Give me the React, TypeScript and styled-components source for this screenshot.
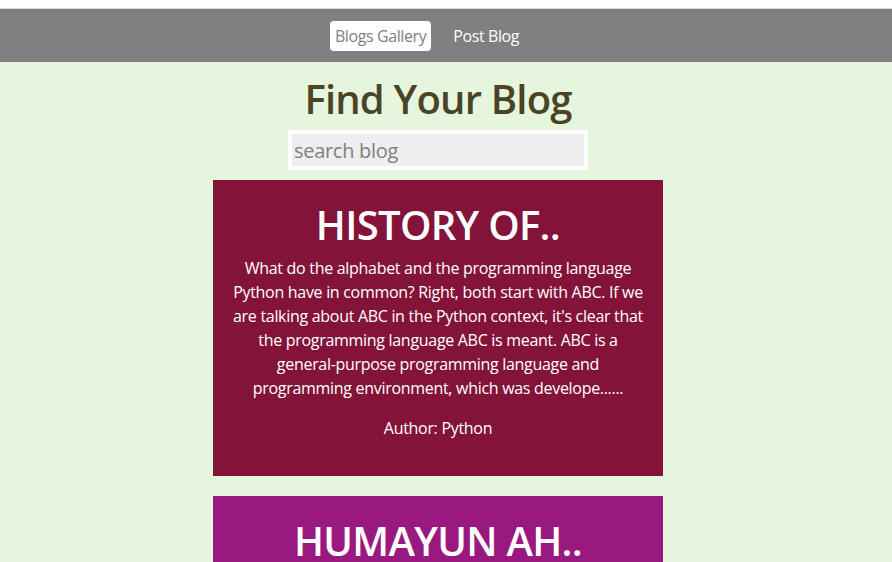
import React from "react";
import styled, { createGlobalStyle } from "styled-components";

const Global = createGlobalStyle`
  html, body { margin: 0; padding: 0; background: #e6f5de; }
  body { font-family: "Open Sans", "Noto Sans", sans-serif; overflow: hidden; }
  * { box-sizing: border-box; }
`;

const TopStrip = styled.div`
  height: 9px;
  background: #ffffff;
  border-bottom: 1px solid #d9d9d9;
`;

const Nav = styled.nav`
  height: 53px;
  background: #808080;
  display: flex;
  align-items: center;
  justify-content: center;
  gap: 17px;
  padding-right: 38px;
`;

const NavLink = styled.a<{ $active?: boolean }>`
  font-size: 16px;
  line-height: 22px;
  letter-spacing: -0.4px;
  padding: 4px 5px;
  border-radius: 4px;
  color: ${(p) => (p.$active ? "#808080" : "#ffffff")};
  background: ${(p) => (p.$active ? "#ffffff" : "transparent")};
  text-decoration: none;
  cursor: pointer;
`;

const Main = styled.main`
  width: calc(100% - 16px);
  display: flex;
  flex-direction: column;
  align-items: center;
`;

const Title = styled.h1`
  margin: 13px 0 7px;
  font-size: 40px;
  line-height: 48px;
  font-weight: 600;
  letter-spacing: -0.8px;
  color: #4a4424;
`;

const Search = styled.input`
  width: 300px;
  height: 40px;
  border: 4px solid #ffffff;
  background: #eeeeee;
  font-family: inherit;
  font-size: 20px;
  letter-spacing: -0.3px;
  padding: 0 2px;
  outline: none;
  color: #333;
  &::placeholder { color: #808080; }
`;

const Cards = styled.div`
  margin-top: 10px;
  display: flex;
  flex-direction: column;
  gap: 20px;
`;

const Card = styled.article<{ $bg: string }>`
  width: 450px;
  background: ${(p) => p.$bg};
  color: #ffffff;
  text-align: center;
  padding: 18px 20px 36px;
`;

const CardTitle = styled.h2`
  margin: 0 0 4px;
  font-size: 40px;
  line-height: 54px;
  font-weight: 600;
  letter-spacing: -0.7px;
`;

const CardText = styled.p`
  margin: 0;
  font-size: 16px;
  line-height: 24px;
  letter-spacing: -0.3px;
`;

const Author = styled.p`
  margin: 16px 0 0;
  font-size: 16px;
  line-height: 24px;
  letter-spacing: -0.3px;
`;

const blogs = [
  {
    title: "HISTORY OF..",
    bg: "#831339",
    text:
      "What do the alphabet and the programming language Python have in common? Right, both start with ABC. If we are talking about ABC in the Python context, it's clear that the programming language ABC is meant. ABC is a general-purpose programming language and programming environment, which was develope......",
    author: "Python",
  },
  {
    title: "HUMAYUN AH..",
    bg: "#9a1980",
    text: "Humayun Ahmed was a Bangladeshi novelist, dramatist, screenwriter, filmmaker, songwriter, scholar and academic.",
    author: "Humayun",
  },
];

export default function App() {
  return (
    <>
      <Global />
      <TopStrip />
      <Nav>
        <NavLink $active>Blogs Gallery</NavLink>
        <NavLink>Post Blog</NavLink>
      </Nav>
      <Main>
        <Title>Find Your Blog</Title>
        <Search placeholder="search blog" autoFocus />
        <Cards>
          {blogs.map((b) => (
            <Card key={b.title} $bg={b.bg}>
              <CardTitle>{b.title}</CardTitle>
              <CardText>{b.text}</CardText>
              <Author>Author: {b.author}</Author>
            </Card>
          ))}
        </Cards>
      </Main>
    </>
  );
}
